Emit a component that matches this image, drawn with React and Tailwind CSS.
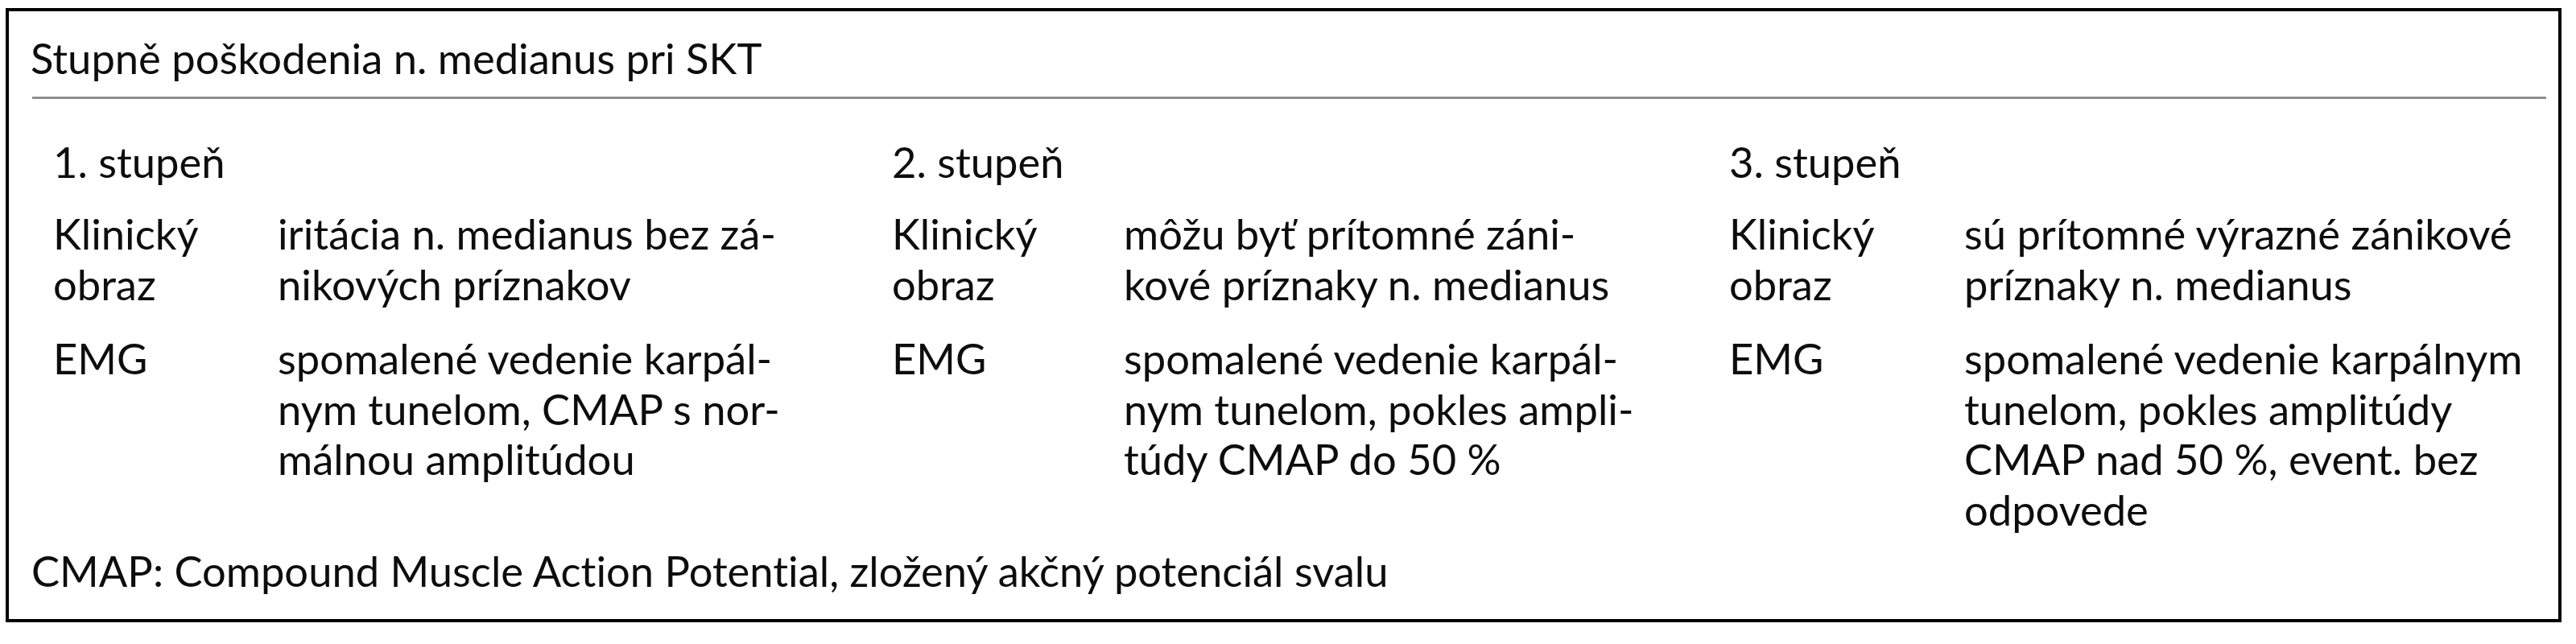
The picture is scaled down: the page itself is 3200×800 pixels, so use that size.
import React from "react";

const cols = [
  {
    head: "1. stupeň",
    w: "w-[1042px]",
    lw: "w-[279px]",
    clin: ["iritácia n. medianus bez zá-", "nikových príznakov"],
    emg: ["spomalené vedenie karpál-", "nym tunelom, CMAP s nor-", "málnou amplitúdou"],
  },
  {
    head: "2. stupeň",
    w: "w-[1040px]",
    lw: "w-[288px]",
    clin: ["môžu byť prítomné záni-", "kové príznaky n. medianus"],
    emg: ["spomalené vedenie karpál-", "nym tunelom, pokles ampli-", "túdy CMAP do 50 %"],
  },
  {
    head: "3. stupeň",
    w: "w-[1000px]",
    lw: "w-[292px]",
    clin: ["sú prítomné výrazné zánikové", "príznaky n. medianus"],
    emg: ["spomalené vedenie karpálnym", "tunelom, pokles amplitúdy", "CMAP nad 50 %, event. bez", "odpovede"],
  },
];

function Lines({ lines }) {
  return (
    <div className="flex flex-col">
      {lines.map((l, i) => (
        <div key={i} className="whitespace-nowrap">
          {l}
        </div>
      ))}
    </div>
  );
}

export default function App() {
  return (
    <div
      className="w-[3200px] h-[800px] bg-white pl-[7px] pt-[10px] text-[#0d0d0d] text-[52.5px] leading-[62.5px] [font-variant-ligatures:none]"
      style={{ fontFamily: "Lato, 'Open Sans', sans-serif" }}
    >
      <div className="w-[3175px] h-[763px] border-4 border-black flex flex-col">
        <div className="pl-[27px] pt-[27px] whitespace-nowrap">
          Stupně poškodenia n. medianus pri SKT
        </div>
        <div className="ml-[29px] mr-[15px] mt-[16px] h-[3px] bg-[#8f8f8f]" />
        <div className="flex pl-[55px] pt-[47px]">
          {cols.map((c, i) => (
            <div key={i} className={`${c.w} flex flex-col`}>
              <div className="whitespace-nowrap">{c.head}</div>
              <div className="flex mt-[27px]">
                <div className={`${c.lw} shrink-0`}>
                  <Lines lines={["Klinický", "obraz"]} />
                </div>
                <Lines lines={c.clin} />
              </div>
              <div className="flex mt-[30px]">
                <div className={`${c.lw} shrink-0`}>EMG</div>
                <Lines lines={c.emg} />
              </div>
            </div>
          ))}
        </div>
        <div className="pl-[28px] mt-[14px] whitespace-nowrap">
          CMAP: Compound Muscle Action Potential, zložený akčný potenciál svalu
        </div>
      </div>
    </div>
  );
}
